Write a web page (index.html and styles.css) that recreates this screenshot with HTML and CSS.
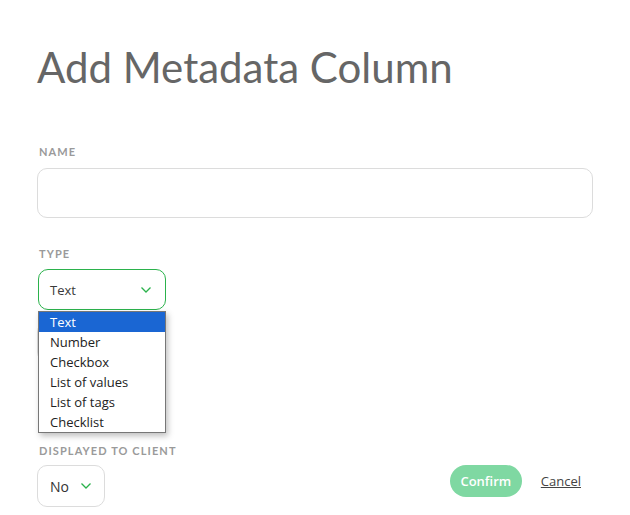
FILE: index.html
```html
<!DOCTYPE html>
<html>
<head>
<meta charset="utf-8">
<link rel="stylesheet" href="styles.css">
</head>
<body>
<div class="modal">
  <h1 class="title">Add Metadata Column</h1>
  <div class="field field-name">
    <div class="label">NAME</div>
    <div class="input"></div>
  </div>
  <div class="field field-type">
    <div class="label">TYPE</div>
    <div class="select-wrap">
      <div class="select select-open">
        <span class="select-text">Text</span>
        <svg class="chev" width="12" height="8" viewBox="0 0 12 8"><path d="M1.5 1.5 L6 6 L10.5 1.5" fill="none" stroke="#2bb24c" stroke-width="1.3"/></svg>
      </div>
      <div class="hidden-field"></div>
      <ul class="menu">
        <li class="active">Text</li>
        <li>Number</li>
        <li>Checkbox</li>
        <li>List of values</li>
        <li>List of tags</li>
        <li>Checklist</li>
      </ul>
    </div>
  </div>
  <div class="footer">
    <div class="field field-client">
      <div class="label">DISPLAYED TO CLIENT</div>
      <div class="select select-small">
        <span class="select-text">No</span>
        <svg class="chev" width="12" height="8" viewBox="0 0 12 8"><path d="M1.5 1.5 L6 6 L10.5 1.5" fill="none" stroke="#2bb24c" stroke-width="1.3"/></svg>
      </div>
    </div>
    <div class="actions">
      <button class="btn-confirm">Confirm</button>
      <a class="btn-cancel">Cancel</a>
    </div>
  </div>
</div>
</body>
</html>
```
FILE: styles.css
```css
* { box-sizing: border-box; }
html, body { margin: 0; padding: 0; background: #fff; }
body { font-family: "Open Sans", sans-serif; }
.modal { padding: 36px 37px 0 37px; width: 630px; }
.title {
  margin: 0;
  font-family: Lato, sans-serif;
  font-weight: 400;
  font-size: 42px;
  line-height: 62px;
  color: #666;
}
.label {
  font-family: Lato, sans-serif;
  font-weight: 700;
  font-size: 11px;
  letter-spacing: 1.1px;
  color: #9a9a9a;
  line-height: 12px;
  padding-left: 2px;
  margin-bottom: 10px;
}
.field-name { margin-top: 48px; }
.input {
  height: 50px;
  border: 1px solid #dcdcdc;
  border-radius: 10px;
}
.field-type { margin-top: 30px; }
.field-type .label { margin-bottom: 9px; }
.field-client .label { margin-bottom: 8px; }
.select-wrap { position: relative; height: 176px; }
.select {
  display: flex;
  align-items: center;
  justify-content: space-between;
  border: 1px solid #dcdcdc;
  border-radius: 10px;
  font-family: "Open Sans", sans-serif;
  font-size: 13px;
  color: #3a3a3a;
}
.select-open {
  width: 128px;
  height: 41px;
  margin-left: 1px;
  border-color: #2bb24c;
  padding: 0 13px 0 11px;
}
.chev { display: block; }
.hidden-field {
  margin-top: 12px;
  width: 129px;
  height: 40px;
  border: 1px solid #ddd;
  border-radius: 10px;
}
.menu {
  position: absolute;
  left: 1px;
  top: 42px;
  width: 128px;
  margin: 0;
  padding: 0;
  list-style: none;
  background: #fff;
  border: 1px solid #777;
  box-shadow: 2px 3px 6px rgba(0,0,0,0.25);
  font-family: "Open Sans", sans-serif;
  font-size: 13px;
  color: #222;
}
.menu li {
  height: 20px;
  line-height: 20px;
  padding-left: 11px;
}
.menu li.active { background: #1a66d3; color: #fff; }
.footer {
  display: flex;
  justify-content: space-between;
  align-items: flex-start;
}
.select-small {
  width: 68px;
  height: 42px;
  padding: 0 12px 0 12px;
  font-size: 14px;
  color: #333;
}
.actions {
  display: flex;
  align-items: center;
  gap: 19px;
  margin-top: 20px;
  margin-right: 12px;
}
.btn-confirm {
  width: 72px;
  height: 32px;
  border: none;
  border-radius: 16px;
  background: #7fd8a2;
  color: #fff;
  font-family: "Open Sans", sans-serif;
  font-weight: 600;
  font-size: 13px;
  padding: 0;
}
.btn-cancel {
  font-family: "Open Sans", sans-serif;
  font-size: 13px;
  color: #444;
  text-decoration: underline;
}
```
